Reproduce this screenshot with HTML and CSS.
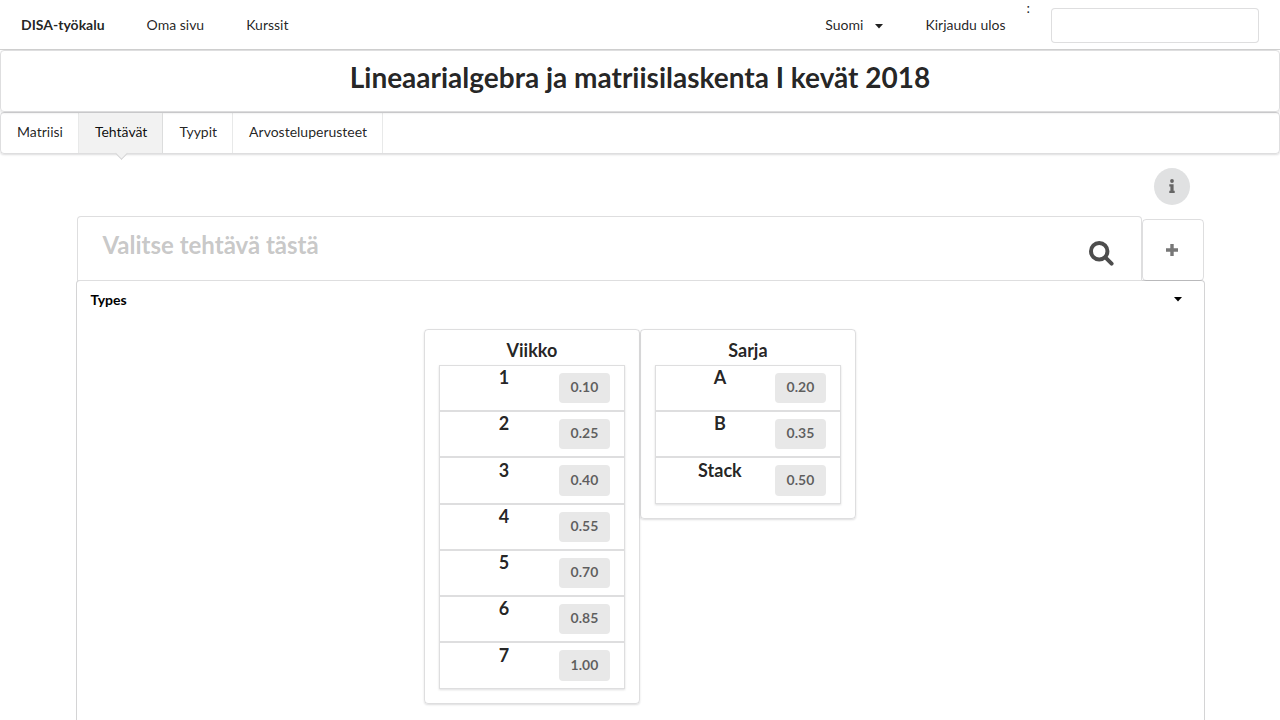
FILE: index.html
```html
<!DOCTYPE html>
<html lang="fi">
<head>
<meta charset="utf-8">
<title>DISA-työkalu</title>
<link rel="stylesheet" href="styles.css">
</head>
<body>
<nav class="topbar">
  <a class="top-item brand">DISA-työkalu</a>
  <a class="top-item">Oma sivu</a>
  <a class="top-item">Kurssit</a>
  <div class="top-right">
    <a class="top-item language">Suomi<svg class="caret" viewBox="0 0 10 5"><path d="M1 0h8L5 4.500z"/></svg></a>
    <a class="top-item">Kirjaudu ulos</a>
    <span class="colon">:</span>
    <input class="top-input" type="text">
  </div>
</nav>
<header class="course"><h1 class="course-title">Lineaarialgebra ja matriisilaskenta I kevät 2018</h1></header>
<nav class="tabs">
  <a class="tab">Matriisi</a>
  <a class="tab active">Tehtävät</a>
  <a class="tab">Tyypit</a>
  <a class="tab">Arvosteluperusteet</a>
</nav>
<main class="content">
  <div class="info-row">
    <button class="info"><svg class="info-icon" viewBox="0 0 6 14"><circle cx="3" cy="2" r="1.9"/><path d="M.3 5.200h4.300v6.600h1.100V14H.3v-2.200h1.100V7.400H.3z"/></svg></button>
  </div>
  <div class="picker">
    <div class="select"><span>Valitse tehtävä tästä</span>
      <svg class="search-icon" viewBox="0 0 24 24"><circle cx="9.800" cy="9.800" r="7.900"/><path d="M15.700 15.700l6 6"/></svg>
    </div>
    <button class="add"><svg class="plus" viewBox="0 0 12 12"><path d="M6 0v12M0 6h12"/></svg></button>
  </div>
  <section class="types">
    <div class="types-head"><span>Types</span><svg class="caret" viewBox="0 0 10 5"><path d="M1 0h8L5 4.500z"/></svg></div>
    <div class="columns">
      <div class="card">
        <h3 class="card-title">Viikko</h3>
        <div class="rows">
          <div class="row"><span class="name">1</span><span class="value">0.10</span></div>
          <div class="row"><span class="name">2</span><span class="value">0.25</span></div>
          <div class="row"><span class="name">3</span><span class="value">0.40</span></div>
          <div class="row"><span class="name">4</span><span class="value">0.55</span></div>
          <div class="row"><span class="name">5</span><span class="value">0.70</span></div>
          <div class="row"><span class="name">6</span><span class="value">0.85</span></div>
          <div class="row"><span class="name">7</span><span class="value">1.00</span></div>
        </div>
      </div>
      <div class="card">
        <h3 class="card-title">Sarja</h3>
        <div class="rows">
          <div class="row"><span class="name">A</span><span class="value">0.20</span></div>
          <div class="row"><span class="name">B</span><span class="value">0.35</span></div>
          <div class="row"><span class="name">Stack</span><span class="value">0.50</span></div>
        </div>
      </div>
    </div>
  </section>
</main>
</body>
</html>
```

FILE: styles.css
```css
* { box-sizing: border-box; }
html, body { height: 100%; }
body {
  display: flex;
  flex-direction: column;
  margin: 0;
  overflow: hidden;
  font: 14px/20px Lato, "Liberation Sans", sans-serif;
  color: rgba(0, 0, 0, .87);
  background: #fff;
}
.topbar {
  display: flex;
  flex: none;
  height: 50px;
  border-bottom: 1px solid #d0d0d0;
}
.top-item { padding: 15px 21px; line-height: 20px; white-space: nowrap; }
.brand { font-weight: 700; }
.top-right { display: flex; margin-left: auto; padding-right: 21px; }
.language { display: flex; align-items: center; gap: 11px; padding-right: 20px; }
.caret { width: 10px; height: 5px; fill: currentColor; }
.language .caret { margin-top: 3px; }
.colon { width: 24.4px; line-height: 16px; }
.top-input {
  width: 208px;
  height: 35px;
  margin-top: 8px;
  border: 1px solid rgba(34, 36, 38, .15);
  border-radius: 4px;
}
.course {
  flex: none;
  height: 62px;
  border: 1px solid #dededf;
  border-radius: 4px;
  box-shadow: 0 1px 2px rgba(34, 36, 38, .15);
  text-align: center;
}
.course-title { margin: 0; padding-top: 8px; font-size: 28px; line-height: 36px; }
.tabs {
  display: flex;
  flex: none;
  height: 42px;
  border: 1px solid rgba(34, 36, 38, .15);
  border-radius: 4px;
  box-shadow: 0 1px 2px rgba(34, 36, 38, .15);
}
.tab {
  position: relative;
  padding: 9px 16px 11px;
  box-shadow: inset -1px 0 rgba(34, 36, 38, .1);
}
.active { background: #f2f2f2; color: rgba(0, 0, 0, .95); }
.active::after {
  content: "";
  position: absolute;
  left: 50%;
  top: 100%;
  width: 8px;
  height: 8px;
  margin: -4px 0 0 -4.5px;
  border: solid #d4d4d5;
  border-width: 0 1px 1px 0;
  background: #f2f2f2;
  transform: rotate(45deg);
}
.content {
  display: flex;
  flex: 1;
  flex-direction: column;
  min-height: 0;
  margin: 0 75px 0 76px;
  padding-top: 14px;
}
.info-row { display: flex; flex: none; justify-content: flex-end; padding-right: 15px; height: 48px; }
.info {
  display: flex;
  align-items: center;
  justify-content: center;
  width: 36px;
  height: 37px;
  padding: 0 0 1px;
  border: 0;
  border-radius: 50%;
  background: #e0e1e2;
}
.info-icon { width: 6px; height: 14px; fill: #666; }
.picker { position: relative; z-index: 1; display: flex; flex: none; align-items: flex-end; padding: 0 1px; }
.select {
  display: flex;
  justify-content: space-between;
  width: 1065px;
  height: 65px;
  padding: 11px 27px 0 24.5px;
  border: 1px solid rgba(34, 36, 38, .15);
  border-radius: 4px 4px 0 0;
  background: #fff;
  font-size: 24px;
  font-weight: 700;
  line-height: 34px;
  color: rgba(191, 191, 191, .87);
}
.search-icon { width: 25px; height: 25px; margin-top: 13px; fill: none; stroke: #4d4d4d; stroke-width: 3.8; stroke-linecap: round; }
.add {
  display: flex;
  align-items: center;
  justify-content: center;
  width: 62px;
  height: 62px;
  padding: 0 2px 0 0;
  border: 1px solid rgba(34, 36, 38, .15);
  border-radius: 4px;
  background: transparent;
}
.plus { width: 12px; height: 12px; fill: none; stroke: #777; stroke-width: 3.4; }
.types {
  flex: 1;
  min-height: 0;
  margin-top: -1px;
  border: 1px solid #d4d4d5;
  border-bottom: 0;
  border-radius: 4px 4px 0 0;
}
.types-head {
  display: flex;
  align-items: center;
  justify-content: space-between;
  height: 37px;
  padding: 0 21px 0 13.5px;
  font-weight: 700;
  color: #000;
}
.columns { display: flex; align-items: flex-start; justify-content: center; padding: 11px 1.200px 0 0; }
.card {
  width: 216px;
  padding: 9px 14px 14px;
  border: 1px solid rgba(34, 36, 38, .15);
  border-radius: 4px;
  box-shadow: 0 1px 2px rgba(34, 36, 38, .15);
}
.card-title { margin: 0 0 2.8px; font-size: 18px; line-height: 23px; text-align: center; }
.rows { box-shadow: 0 1px 2px rgba(34, 36, 38, .15); }
.row {
  display: flex;
  justify-content: space-between;
  height: 46.28px;
  padding: 0 14px 0 0;
  border: 1px solid rgba(34, 36, 38, .15);
}
.name { width: 119px; padding: .3px 0 0 9px; font-size: 18px; font-weight: 700; line-height: 23px; text-align: center; }
.value {
  width: 51px;
  height: 30.3px;
  margin-top: 7px;
  padding-top: 4.2px;
  flex-shrink: 0;
  border-radius: 4px;
  background: #e8e8e8;
  color: rgba(0, 0, 0, .6);
  font-weight: 700;
  text-align: center;
}
```
